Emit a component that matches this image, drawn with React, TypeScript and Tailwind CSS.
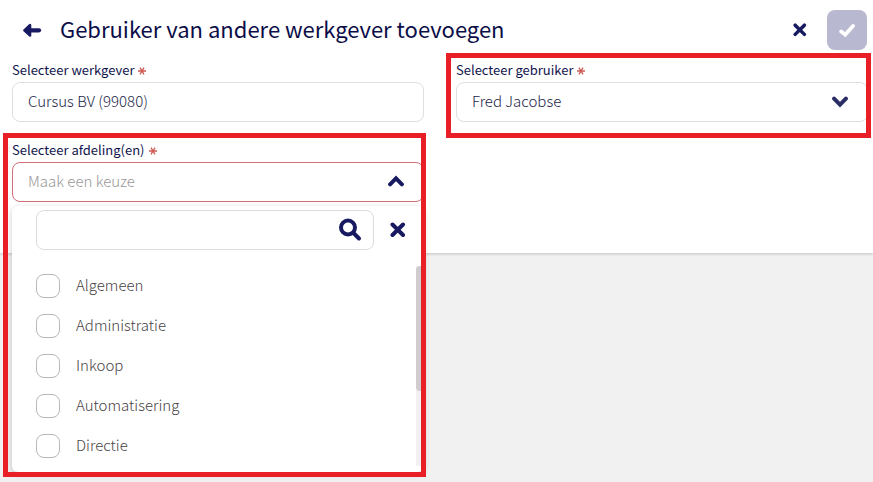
import React, { useState } from 'react';

interface IconProps {
  className?: string;
}

const ArrowLeftIcon: React.FC<IconProps> = ({ className }) => (
  <svg viewBox="0 0 20 16" className={className} fill="none" stroke="currentColor" aria-hidden="true">
    <path d="M9 8.300h8" strokeWidth="4.200" strokeLinecap="round" />
    <path d="M2.300 8.300l5.800-5.300v10.600z" fill="currentColor" strokeWidth="2.400" strokeLinejoin="round" />
  </svg>
);

const CrossIcon: React.FC<IconProps> = ({ className }) => (
  <svg viewBox="0 0 16 16" className={className} fill="none" stroke="currentColor" aria-hidden="true">
    <path d="M2.500 2.500l10.500 10.500M13 2.500l-10.500 10.500" strokeWidth="4" strokeLinecap="round" />
  </svg>
);

const CheckIcon: React.FC<IconProps> = ({ className }) => (
  <svg viewBox="0 0 16 16" className={className} fill="none" stroke="currentColor" aria-hidden="true">
    <path d="M2.200 9.500l4 3.200 7.800-8.700" strokeWidth="3.800" strokeLinecap="round" strokeLinejoin="miter" />
  </svg>
);

const ChevronIcon: React.FC<IconProps> = ({ className }) => (
  <svg viewBox="0 0 16 12" className={className} fill="none" stroke="currentColor" aria-hidden="true">
    <path d="M2.100 2.700l5.900 5.900 5.900-5.900" strokeWidth="4" strokeLinecap="round" />
  </svg>
);

const SearchIcon: React.FC<IconProps> = ({ className }) => (
  <svg viewBox="0 0 24 24" className={className} fill="none" stroke="currentColor" aria-hidden="true">
    <circle cx="10" cy="9.500" r="7" strokeWidth="4" />
    <path d="M15.500 15l5.500 5.500" strokeWidth="4" strokeLinecap="round" />
  </svg>
);

const RequiredMark: React.FC = () => (
  <svg viewBox="0 0 8 8" className="w-2 h-2 mt-0.5 text-[#cf5b55]" fill="none" stroke="currentColor" aria-hidden="true">
    <path d="M0 4h8M2 0.600l4 6.800M6 0.600l-4 6.800" strokeWidth="1.300" />
  </svg>
);

const labelStyle = 'flex items-center gap-1 mb-0.5 text-[13px] leading-5 font-normal text-[#0f144c]';

const departments = ['Algemeen', 'Administratie', 'Inkoop', 'Automatisering', 'Directie'];

const Header: React.FC = () => (
  <header className="flex items-center h-15 pl-[22px] pr-[6px] text-[#171a60]">
    <button type="button" aria-label="Terug">
      <ArrowLeftIcon className="w-5 h-4" />
    </button>
    <h1 className="ml-[18px] pb-1 flex-1 text-[22px] leading-8 font-normal text-[#0c0d48]">
      Gebruiker van andere werkgever toevoegen
    </h1>
    <button type="button" aria-label="Annuleren" className="p-2 mr-3">
      <CrossIcon className="w-3.5 h-3.5" />
    </button>
    <button
      type="button"
      aria-label="Opslaan"
      className="flex items-center justify-center w-10 h-10 rounded-lg bg-[#b9b8d1] text-white"
    >
      <CheckIcon className="w-4 h-4" />
    </button>
  </header>
);

const DepartmentMenu: React.FC = () => {
  const [query, setQuery] = useState('');
  const [selected, setSelected] = useState<string[]>([]);

  const toggle = (name: string) => {
    setSelected((prev) => (prev.includes(name) ? prev.filter((n) => n !== name) : [...prev, name]));
  };

  const visible = departments.filter((name) => name.toLowerCase().includes(query.toLowerCase()));

  return (
    <div className="absolute left-0 right-0 top-full mt-1 pt-1 pb-1.5 rounded-md bg-white shadow-[0_2px_6px_rgba(0,0,0,0.2)]">
      <div className="flex items-center pl-6 pr-[18px]">
        <div className="relative flex-1">
          <input
            type="text"
            aria-label="Zoeken"
            value={query}
            onChange={(e) => setQuery(e.target.value)}
            className="block w-full h-10 pl-4 pr-12 rounded-lg border border-[#dcdcdf] text-[15px] font-light text-[#2f3263] outline-none"
          />
          <SearchIcon className="absolute right-3 top-2 w-6 h-6 text-[#171a60] pointer-events-none" />
        </div>
        <button type="button" aria-label="Wissen" onClick={() => setQuery('')} className="ml-4 text-[#171a60]">
          <CrossIcon className="w-4 h-4" />
        </button>
      </div>
      <div className="flex mt-4">
        <ul className="flex-1">
          {visible.map((name) => (
            <li key={name}>
              <label className="flex items-center gap-4 h-10 pl-6 text-[15px] font-light text-[#484345]">
                <input
                  type="checkbox"
                  checked={selected.includes(name)}
                  onChange={() => toggle(name)}
                  className="appearance-none w-6 h-6 rounded-lg border border-[#b9b7b9] bg-white checked:bg-[#171a60]"
                />
                <span className="pb-0.5">{name}</span>
              </label>
            </li>
          ))}
        </ul>
        {/* Scroll track */}
        <div className="w-2 bg-[#f3f0f1]">
          <div className="h-[125px] rounded bg-[#d0cbcd]" />
        </div>
      </div>
    </div>
  );
};

const App: React.FC = () => {
  const [open, setOpen] = useState(true);
  const [employer, setEmployer] = useState('Cursus BV (99080)');

  return (
    <div className="min-h-screen bg-[#f1f1f1] font-['Source_Sans_Pro','Noto_Sans_CJK_JP',sans-serif]">
      <main className="bg-white pb-[51px] shadow-[0_1px_3px_rgba(0,0,0,0.2)]">
        <Header />
        <form className="grid grid-cols-2 gap-x-8 gap-y-[18px] pl-3 pr-[5px]">
          <div>
            <label htmlFor="employer" className={labelStyle}>
              Selecteer werkgever <RequiredMark />
            </label>
            <input
              id="employer"
              type="text"
              value={employer}
              onChange={(e) => setEmployer(e.target.value)}
              className="block w-full h-10 px-[15px] pb-1 rounded-lg border border-[#dfdfe2] text-[15px] font-light text-[#1c1e48] outline-none"
            />
          </div>

          <div className="relative">
            <label htmlFor="user" className={labelStyle}>
              Selecteer gebruiker <RequiredMark />
            </label>
            <div className="relative">
              <select
                id="user"
                className="block appearance-none w-full h-10 pl-[15px] pr-12 pb-0.5 rounded-lg border border-[#dfdfe2] bg-white text-[15px] font-light text-[#1c1e48] outline-none"
              >
                <option>Fred Jacobse</option>
              </select>
              <ChevronIcon className="absolute right-5 top-[14px] w-4 h-3 text-[#2a2c66] pointer-events-none" />
            </div>
            <div className="absolute -left-[10px] -right-[3px] -top-[7px] -bottom-4 border-5 border-[#e81f27] pointer-events-none" />
          </div>

          <div className="relative">
            <label htmlFor="departments" className={labelStyle}>
              Selecteer afdeling(en) <RequiredMark />
            </label>
            <button
              id="departments"
              type="button"
              aria-expanded={open}
              onClick={() => setOpen(!open)}
              className="flex items-center justify-between w-full h-10 pl-[15px] pr-[19px] pb-0.5 rounded-lg border border-[#cf6f78] text-[15px] font-light text-[#989597]"
            >
              Maak een keuze
              <ChevronIcon className="w-4 h-3 rotate-180 text-[#171a60]" />
            </button>
            {open && <DepartmentMenu />}
            <div className="absolute -left-[9px] -right-[2px] -top-[7px] h-[344px] border-5 border-[#e81f27] pointer-events-none" />
          </div>
        </form>
      </main>
    </div>
  );
};

export default App;
